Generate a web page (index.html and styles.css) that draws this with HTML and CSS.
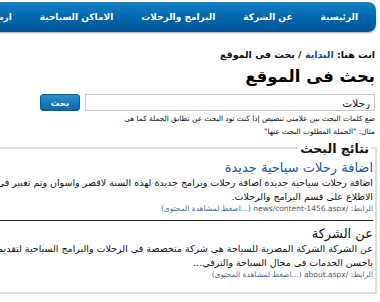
FILE: index.html
```html
<!DOCTYPE html>
<html lang="ar" dir="rtl">
<head>
<meta charset="utf-8">
<link rel="stylesheet" href="styles.css">
</head>
<body>
<div class="page">
  <nav class="nav">
    <a class="nav-item">الرئيسية</a>
    <a class="nav-item">عن الشركة</a>
    <a class="nav-item">البرامج والرحلات</a>
    <a class="nav-item">الاماكن السياحية</a>
    <a class="nav-item">ارشيف الاخبار</a>
  </nav>
  <main class="content">
    <div class="crumbs">انت هنا: <a class="crumb-link">البداية</a> / بحث فى الموقع</div>
    <h1 class="title">بحث فى الموقع</h1>
    <div class="search-row">
      <input class="search-input" type="text" value="رحلات">
      <button class="search-btn">بحث</button>
    </div>
    <p class="help">ضع كلمات البحث بين علامتى تنصيص إذا كنت تود البحث عن تطابق الجملة كما هى<br>مثال: "الجملة المطلوب البحث عنها"</p>
    <fieldset class="results">
      <legend class="results-legend">نتائج البحث</legend>
      <div class="result">
        <a class="result-title">اضافة رحلات سياحية جديدة</a>
        <p class="result-body">اضافة رحلات سياحية جديدة اضافة رحلات وبرامج جديدة لهذه السنة لاقصر واسوان وتم تغيير فى البرامج السياحية ويمكنكم<br>الاطلاع على قسم البرامج والرحلات.</p>
        <div class="result-link">الرابط: <span class="url">/news/content-1456.aspx</span> <a class="more">(...اضغط لمشاهدة المحتوى)</a></div>
      </div>
      <div class="result last">
        <a class="result-title dark">عن الشركة</a>
        <p class="result-body">عن الشركة الشركة المصرية للسياحة  هى شركة متخصصة  فى الرحلات والبرامج السياحية لتقديم افضل الخدمات<br>باحسن الخدمات فى مجال السياحة والترفي...</p>
        <div class="result-link">الرابط: <span class="url">/about.aspx</span> <a class="more">(...اضغط لمشاهدة المحتوى)</a></div>
      </div>
    </fieldset>
  </main>
</div>
</body>
</html>
```
FILE: styles.css
```css
html, body {
  margin: 0;
  padding: 0;
  background: #fff;
  overflow: hidden;
}
body {
  font-family: "DejaVu Sans", sans-serif;
  color: #111;
  width: 380px;
  height: 302px;
}
.page {
  width: 560px;
}
.nav {
  display: flex;
  flex-wrap: nowrap;
  margin: 2px 4px 0 0;
  height: 30px;
  align-items: center;
  padding-right: 4px;
  background: linear-gradient(#1583c8, #0067ad 50%, #00559a);
  border-radius: 8px;
  box-shadow: 0 1px 2px rgba(0,0,0,0.35);
  white-space: nowrap;
}
.nav-item {
  color: #fff;
  font-size: 9px;
  font-weight: bold;
  padding: 0 14px;
  flex: none;
}
.content {
  padding: 0 5px 0 0;
}
.crumbs {
  margin-top: 16px;
  font-size: 9.5px;
  font-weight: bold;
  color: #111;
  line-height: 13px;
}
.crumb-link {
  color: #1a4f8a;
}
.title {
  margin: 6px 0 0;
  font-size: 16.5px;
  line-height: 20px;
  font-weight: bold;
  color: #000;
}
.search-row {
  display: flex;
  align-items: center;
  gap: 5px;
  margin-top: 7px;
}
.search-input {
  width: 290px;
  height: 17px;
  box-sizing: border-box;
  border: 1px solid #c8c8c8;
  padding: 0 4px;
  font-family: "DejaVu Sans", sans-serif;
  font-size: 10.5px;
  color: #111;
  margin: 0;
}
.search-btn {
  width: 40px;
  height: 17px;
  box-sizing: border-box;
  border: 1px solid #0a5e9a;
  border-radius: 3px;
  background: linear-gradient(#2b8ed0, #0a67ad);
  color: #fff;
  font-family: "DejaVu Sans", sans-serif;
  font-size: 8.5px;
  font-weight: bold;
  padding: 0;
  margin: 0;
}
.help {
  margin: 1px 0 0;
  font-size: 7.4px;
  line-height: 13px;
  color: #111;
}
.results {
  margin: 0 -2px 0 0;
  padding: 0 2px 10px 0;
  border: 2px solid #ddd;
  height: 142px;
}
.results-legend {
  font-size: 12.5px;
  font-weight: bold;
  padding: 3px 2px 0;
  margin-right: 2px;
  color: #111;
  line-height: 16px;
}
.result {
  padding-top: 3px;
  border-bottom: 1px solid #222;
  padding-bottom: 6px;
}
.result.last {
  border-bottom: none;
  padding-top: 5px;
}
.result-title {
  display: block;
  font-size: 13px;
  line-height: 16px;
  color: #1a5a96;
}
.result-title.dark {
  color: #111;
}
.result-body {
  margin: 0;
  font-size: 9.5px;
  line-height: 14px;
  white-space: nowrap;
}
.result-link {
  font-size: 7.5px;
  line-height: 10px;
  color: #666;
}
.url {
  color: #555;
}
.more {
  color: #3a6ea5;
}
```
